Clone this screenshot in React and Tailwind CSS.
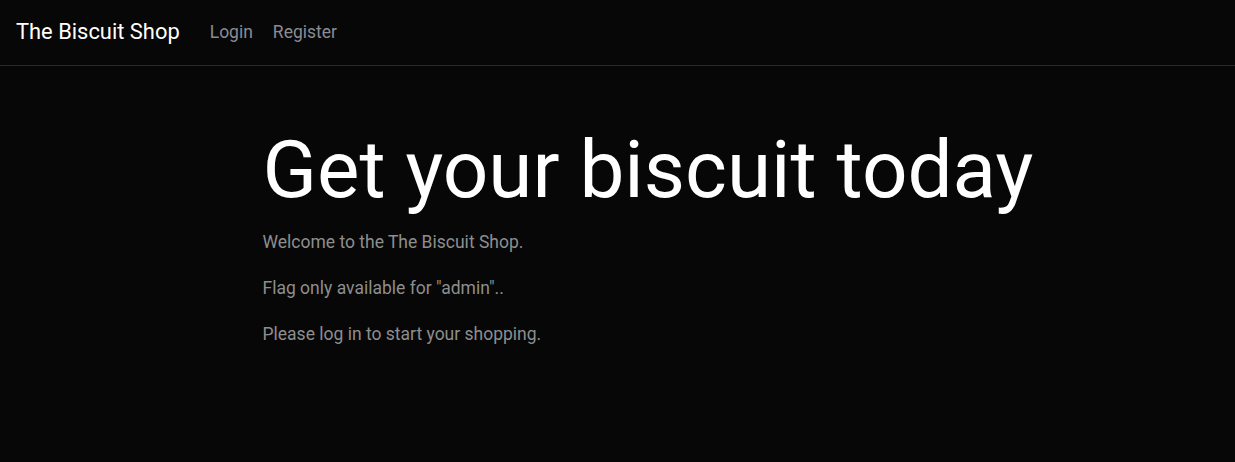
export default function App() {
  return (
    <div className="min-h-[462px] bg-[#070707] font-['Roboto',sans-serif]">
      {/* Navbar */}
      <nav className="flex h-[66px] items-center border-b border-[#2a2a2a] px-4">
        <a href="#" className="text-[21.9px] text-white">
          The Biscuit Shop
        </a>
        <div className="ml-[30px] flex gap-5 text-[17.5px] text-[#8b8b93]">
          <a href="#">Login</a>
          <a href="#">Register</a>
        </div>
      </nav>

      {/* Hero */}
      <main className="mx-auto w-[740px] px-[15px] pt-[56px]">
        <h1 className="mb-[10px] whitespace-nowrap text-[80px] leading-[96px] text-white">Get your biscuit today</h1>
        <p className="mb-[18px] text-[17.5px] leading-[28px] text-[#8e8e8e]">Welcome to the The Biscuit Shop.</p>
        <p className="mb-[18px] text-[17.5px] leading-[28px] text-[#8e8e8e]">Flag only available for "admin"..</p>
        <p className="text-[17.5px] leading-[28px] text-[#8e8e8e]">Please log in to start your shopping.</p>
      </main>
    </div>
  )
}
